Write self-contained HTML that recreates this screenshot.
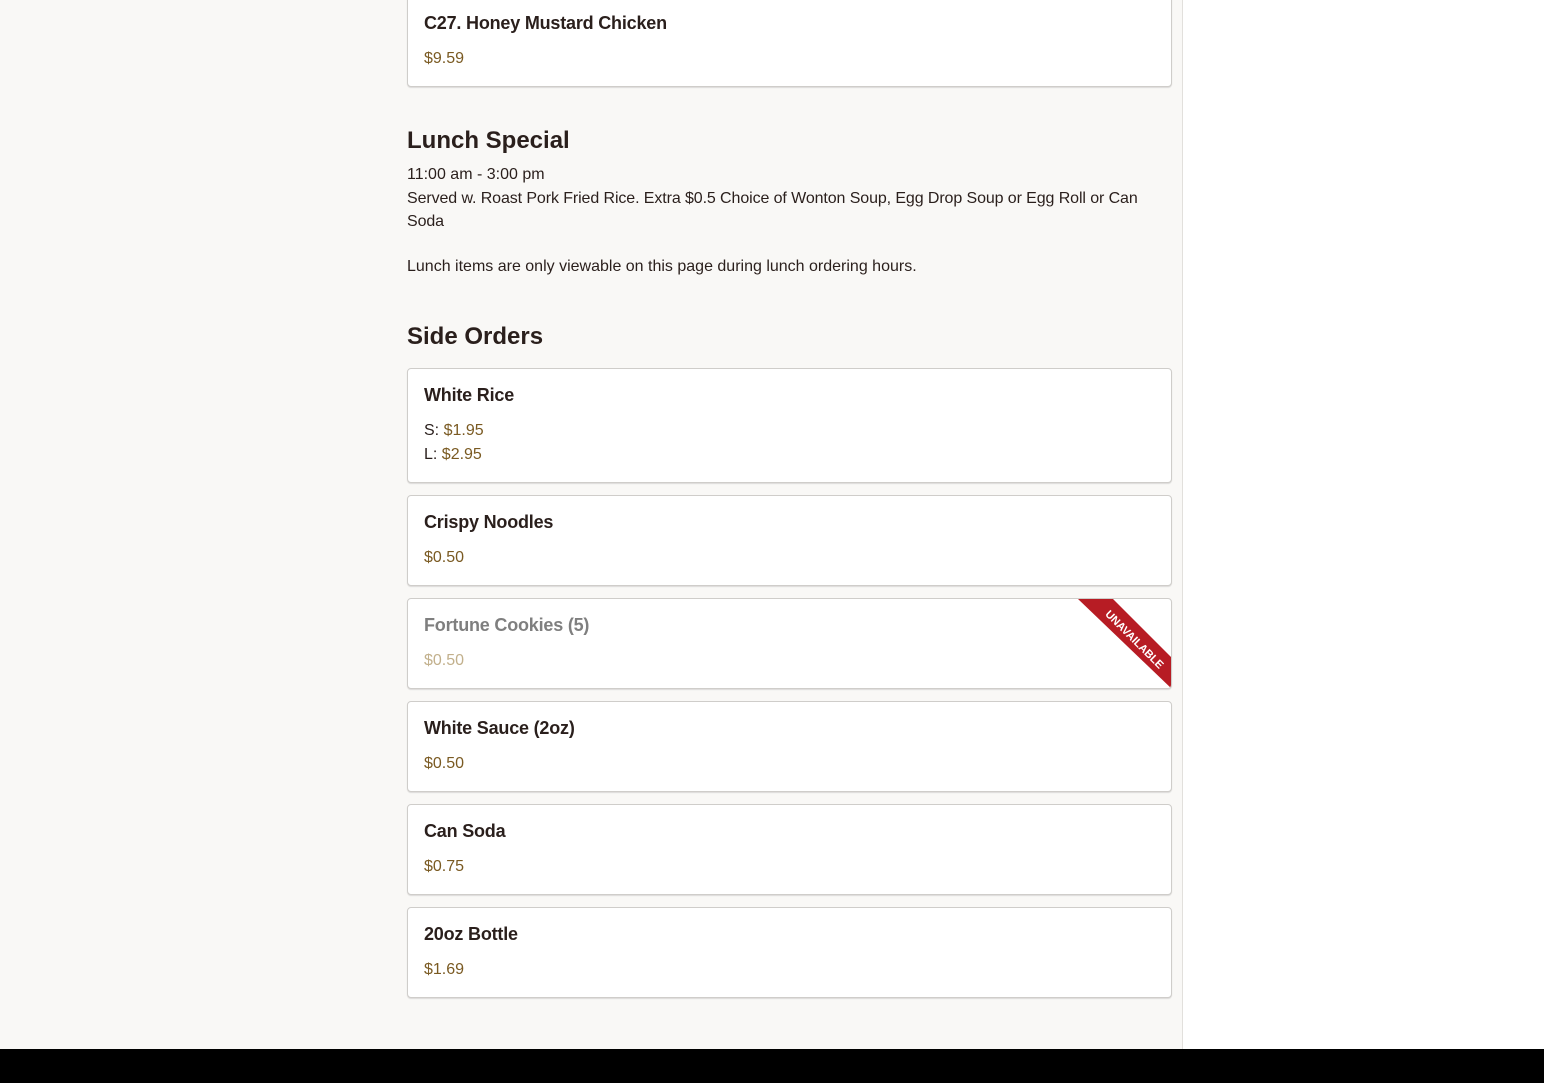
<!DOCTYPE html>
<html><head><meta charset="utf-8"><style>
*{margin:0;padding:0;box-sizing:border-box}
body{width:1544px;height:1083px;position:relative;overflow:hidden;background:#fff;font-family:"Liberation Sans",sans-serif;color:#2a1f1c}
.left{position:absolute;left:0;top:0;width:1183px;height:1049px;background:#f9f8f6;border-right:1px solid #e2e0dc}
.card{position:absolute;left:407px;width:765px;background:#fff;border:1px solid #cfcdca;border-radius:4px;box-shadow:0 1px 1px rgba(0,0,0,.12);overflow:hidden}
.t{position:absolute;left:16px;font-size:18px;font-weight:bold;letter-spacing:-0.2px}
.p{position:absolute;left:16px;font-size:16px;color:#7a5a22}
.h{position:absolute;left:407px;font-size:24px;font-weight:bold}
.x{position:absolute;left:407px;font-size:16px}
.foot{position:absolute;left:0;top:1049px;width:1544px;height:34px;background:#000}
</style></head><body>
<div class="left"></div>
<div class="card" style="top:-10px;height:97px"><div class="t" style="top:22px">C27. Honey Mustard Chicken</div><div class="p" style="top:59px">$9.59</div></div>
<div class="h" style="top:127px">Lunch Special</div>
<div class="x" style="top:166px">11:00 am - 3:00 pm</div>
<div class="x" style="top:187px;width:760px;line-height:23px;letter-spacing:-0.1px">Served w. Roast Pork Fried Rice. Extra $0.5 Choice of Wonton Soup, Egg Drop Soup or Egg Roll or Can Soda</div>
<div class="x" style="top:258px">Lunch items are only viewable on this page during lunch ordering hours.</div>
<div class="h" style="top:323px">Side Orders</div>
<div class="card" style="top:368px;height:115px"><div class="t" style="top:16px">White Rice</div><div class="p" style="top:53px"><span style="color:#2a1f1c">S:</span> $1.95</div><div class="p" style="top:77px"><span style="color:#2a1f1c">L:</span> $2.95</div></div>
<div class="card" style="top:495px;height:91px"><div class="t" style="top:16px">Crispy Noodles</div><div class="p" style="top:53px">$0.50</div></div>
<div class="card" style="top:598px;height:91px"><div class="t" style="top:16px;color:#7f7f7f">Fortune Cookies (5)</div><div class="p" style="top:53px;color:#c2b08c">$0.50</div>
<svg style="position:absolute;left:0;top:0" width="765" height="91"><polygon points="670,0 705,0 765,60 765,91" fill="#b71c24"/><text x="726" y="41" transform="rotate(45 726 41)" text-anchor="middle" dominant-baseline="middle" font-family="Liberation Sans" font-size="11" font-weight="bold" fill="#fff">UNAVAILABLE</text></svg></div>
<div class="card" style="top:701px;height:91px"><div class="t" style="top:16px">White Sauce (2oz)</div><div class="p" style="top:53px">$0.50</div></div>
<div class="card" style="top:804px;height:91px"><div class="t" style="top:16px">Can Soda</div><div class="p" style="top:53px">$0.75</div></div>
<div class="card" style="top:907px;height:91px"><div class="t" style="top:16px">20oz Bottle</div><div class="p" style="top:53px">$1.69</div></div>
<div class="foot"></div>
</body></html>
